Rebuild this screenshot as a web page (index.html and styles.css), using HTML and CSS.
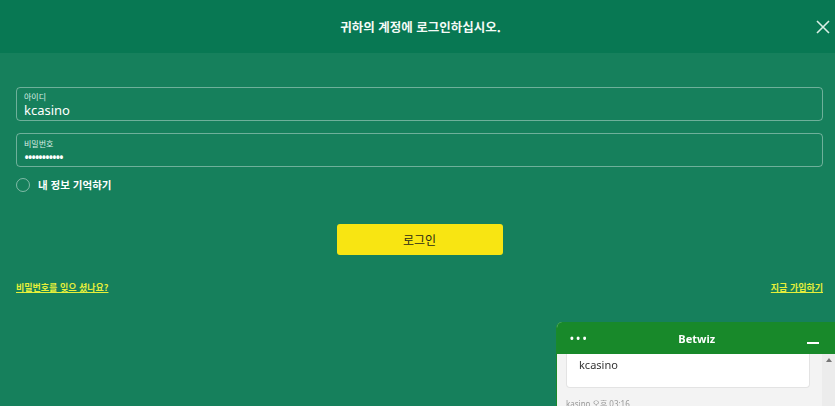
FILE: index.html
```html
<!DOCTYPE html>
<html lang="ko">
<head>
    <meta charset="UTF-8">
    <meta name="viewport" content="width=device-width, initial-scale=1.0">
    <title>로그인</title>
    <link rel="stylesheet" href="styles.css">
</head>
<body>
    <div class="modal-header">
        <h1>귀하의 계정에 로그인하십시오.</h1>
        <span class="close">
            <svg width="14" height="14" viewBox="0 0 14 14"><path d="M1 1L13 13M13 1L1 13" stroke="#d9efe5" stroke-width="1.6"/></svg>
        </span>
    </div>

    <form class="login-form">
        <div class="field">
            <label>아이디</label>
            <div class="value">kcasino</div>
        </div>
        <div class="field">
            <label>비밀번호</label>
            <div class="value dots">•••••••••••</div>
        </div>

        <div class="remember">
            <span class="radio"></span>
            <span>내 정보 기억하기</span>
        </div>

        <div class="actions">
            <button type="button">로그인</button>
        </div>

        <div class="links">
            <a href="#">비밀번호를 잊으 셨나요?</a>
            <a href="#">지금 가입하기</a>
        </div>
    </form>

    <div class="chat">
        <div class="chat-head">
            <span class="dots3">• • •</span>
            <span class="chat-title">Betwiz</span>
            <span class="minimize"></span>
        </div>
        <div class="chat-body">
            <div class="chat-scroll">
                <div class="msg">kcasino</div>
                <div class="stamp">kasino 오후 03:16</div>
            </div>
            <div class="scrollbar"><span class="arrow"></span></div>
        </div>
    </div>
</body>
</html>
```

FILE: styles.css
```css
body {
    margin: 0;
    font-family: "Noto Sans", "Noto Sans CJK KR", sans-serif;
    background-color: #16805c;
    color: #fff;
    overflow: hidden;
}
.modal-header {
    height: 53px;
    background-color: #087853;
    display: flex;
    align-items: center;
    justify-content: center;
    position: relative;
}
.modal-header h1 {
    margin: 0 0 0 6px;
    font-size: 12.5px;
    font-weight: 600;
    font-family: "Noto Sans CJK KR", sans-serif;
    color: #f4fbf7;
}
.close {
    position: absolute;
    right: 5px;
    top: 20px;
    line-height: 0;
}
.login-form {
    padding: 34px 12px 0 16px;
}
.field {
    height: 32px;
    border: 1px solid rgba(255, 255, 255, 0.38);
    border-radius: 4px;
    padding: 0 7px;
    margin-bottom: 12px;
    display: flex;
    flex-direction: column;
    justify-content: center;
}
.field label {
    font-size: 8px;
    line-height: 10px;
    font-family: "Noto Sans CJK KR", sans-serif;
    color: #d8eee4;
    margin-top: 2px;
}
.field .value {
    font-size: 13px;
    line-height: 16px;
    color: #fff;
}
.field .dots {
    font-size: 14px;
    letter-spacing: -1.8px;
    line-height: 12px;
    margin-top: 3px;
}
.remember {
    display: flex;
    align-items: center;
    gap: 8px;
    margin-top: -2px;
    font-size: 10.5px;
    font-weight: bold;
    font-family: "Noto Sans CJK KR", sans-serif;
}
.radio {
    width: 12px;
    height: 12px;
    border: 1px solid rgba(255, 255, 255, 0.45);
    border-radius: 50%;
}
.actions {
    display: flex;
    justify-content: center;
    margin-top: 32px;
}
.actions button {
    width: 166px;
    height: 31px;
    background-color: #f8e512;
    border: none;
    border-radius: 3px;
    font-family: "Noto Sans CJK KR", sans-serif;
    font-size: 12px;
    color: #2a2a16;
}
.links {
    display: flex;
    justify-content: space-between;
    margin-top: 26px;
}
.links a {
    font-size: 9px;
    font-weight: bold;
    font-family: "Noto Sans CJK KR", sans-serif;
    color: #e6ef3a;
    text-decoration: underline;
}
.chat {
    position: fixed;
    top: 322px;
    right: 0;
    width: 278px;
    height: 200px;
    border-left: 1px solid #1a8a2a;
    border-radius: 6px 0 0 0;
    overflow: hidden;
    background-color: #f3f3f3;
}
.chat-head {
    height: 32px;
    background-color: #18892a;
    display: flex;
    align-items: center;
    justify-content: space-between;
    padding: 0 16px 0 13px;
}
.dots3 {
    font-size: 10px;
    font-weight: bold;
    color: #fff;
}
.chat-title {
    font-size: 11px;
    font-weight: bold;
    margin-left: 0;
}
.minimize {
    width: 12px;
    height: 2px;
    background: #fff;
    margin-top: 10px;
}
.chat-body {
    display: flex;
}
.chat-scroll {
    flex: 1;
    padding: 0 12px 0 9px;
}
.msg {
    height: 26px;
    background: #fff;
    border: 1px solid #e3e3e3;
    border-top: none;
    border-radius: 0 0 4px 4px;
    padding: 3px 12px 4px;
    font-size: 11px;
    color: #333;
}
.stamp {
    margin-top: 10px;
    font-size: 8px;
    color: #999;
}
.scrollbar {
    width: 13px;
    height: 120px;
    background: #ececec;
    display: flex;
    justify-content: center;
}
.arrow {
    margin-top: 4px;
    width: 0;
    height: 0;
    border-left: 3px solid transparent;
    border-right: 3px solid transparent;
    border-bottom: 4px solid #777;
}
```
